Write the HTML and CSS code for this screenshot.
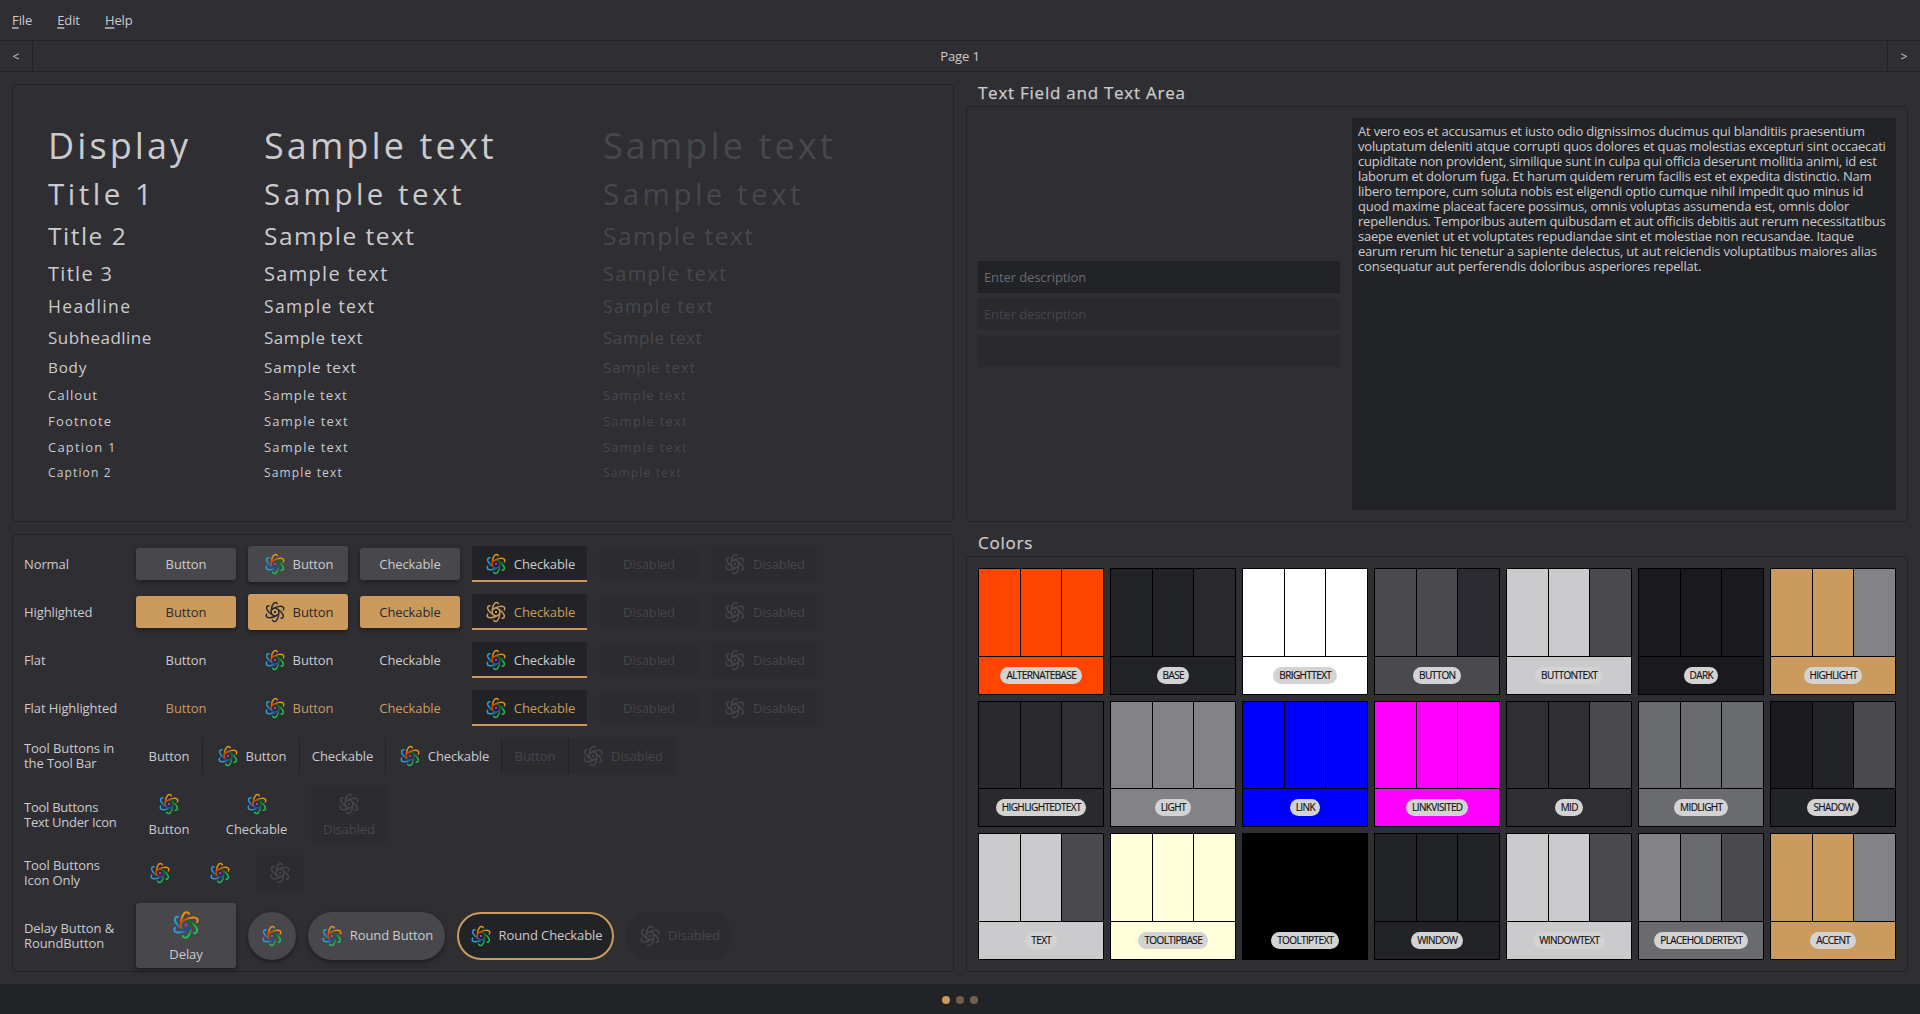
FILE: index.html
```html
<!DOCTYPE html>
<html lang="en">
<head>
<meta charset="utf-8">
<title>Page 1</title>
<link rel="stylesheet" href="styles.css">
</head>
<body>
<svg class="defs" width="0" height="0" aria-hidden="true">
  <defs>
    <linearGradient id="gold" gradientUnits="userSpaceOnUse" x1="12" y1="2" x2="9" y2="14"><stop offset=".3" stop-color="#e8930f"/><stop offset=".75" stop-color="#cc4a05"/></linearGradient>
    <linearGradient id="leaf" gradientUnits="userSpaceOnUse" x1="12" y1="2" x2="9" y2="14"><stop offset=".2" stop-color="#1fbf55"/><stop offset=".8" stop-color="#0b6b22"/></linearGradient>
    <linearGradient id="sky" gradientUnits="userSpaceOnUse" x1="12" y1="2" x2="9" y2="14"><stop offset=".25" stop-color="#2a9cd8"/><stop offset=".85" stop-color="#234a94"/></linearGradient>
    <path id="arm" d="M14.3 3.7C13.6 2.2 12 1.9 10.7 3.2C9.1 4.9 8.5 7.6 8.3 10C8.2 11.6 8.2 12.8 8.4 14" fill="none" stroke-width="1.5" stroke-linecap="round"/>
    <symbol id="logo" viewBox="0 0 24 24">
      <use href="#arm" stroke="url(#leaf)" transform="rotate(120 12 12)"/>
      <use href="#arm" stroke="url(#leaf)" transform="rotate(180 12 12)"/>
      <use href="#arm" stroke="url(#sky)" transform="rotate(240 12 12)"/>
      <use href="#arm" stroke="url(#sky)" transform="rotate(300 12 12)"/>
      <use href="#arm" stroke="url(#gold)"/>
      <use href="#arm" stroke="url(#gold)" transform="rotate(60 12 12)"/>
      <rect x="11" y="11" width="2" height="2" fill="#a33fc0"/>
    </symbol>
    <symbol id="mono" viewBox="0 0 24 24">
      <g stroke="currentColor">
      <use href="#arm"/>
      <use href="#arm" transform="rotate(60 12 12)"/>
      <use href="#arm" transform="rotate(120 12 12)"/>
      <use href="#arm" transform="rotate(180 12 12)"/>
      <use href="#arm" transform="rotate(240 12 12)"/>
      <use href="#arm" transform="rotate(300 12 12)"/>
      </g>
      <rect x="11" y="11" width="2" height="2" fill="currentColor"/>
    </symbol>
  </defs>
</svg>

<nav class="menubar"><span><u>F</u>ile</span><span><u>E</u>dit</span><span><u>H</u>elp</span></nav>
<header class="toolbar"><span class="nav prev">&lt;</span><span class="page-title">Page 1</span><span class="nav next">&gt;</span></header>

<main class="content">
  <div class="column left">
    <section class="panel type">
      <div class="t display"><span>Display</span><span>Sample text</span><span>Sample text</span></div>
      <div class="t title1"><span>Title 1</span><span>Sample text</span><span>Sample text</span></div>
      <div class="t title2"><span>Title 2</span><span>Sample text</span><span>Sample text</span></div>
      <div class="t title3"><span>Title 3</span><span>Sample text</span><span>Sample text</span></div>
      <div class="t headline"><span>Headline</span><span>Sample text</span><span>Sample text</span></div>
      <div class="t subheadline"><span>Subheadline</span><span>Sample text</span><span>Sample text</span></div>
      <div class="t body"><span>Body</span><span>Sample text</span><span>Sample text</span></div>
      <div class="t callout"><span>Callout</span><span>Sample text</span><span>Sample text</span></div>
      <div class="t footnote"><span>Footnote</span><span>Sample text</span><span>Sample text</span></div>
      <div class="t footnote cap1"><span>Caption 1</span><span>Sample text</span><span>Sample text</span></div>
      <div class="t cap2"><span>Caption 2</span><span>Sample text</span><span>Sample text</span></div>
    </section>

    <section class="panel buttons">
      <div class="row"><span class="label">Normal</span>
        <div class="btn raised w100">Button</div>
        <div class="btn raised tall w100"><svg class="icon"><use href="#logo"/></svg>Button</div>
        <div class="btn raised w100">Checkable</div>
        <div class="btn checked tall w115"><svg class="icon"><use href="#logo"/></svg>Checkable</div>
        <div class="btn disabled w100">Disabled</div>
        <div class="btn disabled tall w106"><svg class="icon"><use href="#mono"/></svg>Disabled</div>
      </div>
      <div class="row"><span class="label">Highlighted</span>
        <div class="btn raised gold w100">Button</div>
        <div class="btn raised gold tall w100"><svg class="icon"><use href="#mono"/></svg>Button</div>
        <div class="btn raised gold w100">Checkable</div>
        <div class="btn checked accent tall w115"><svg class="icon"><use href="#mono"/></svg>Checkable</div>
        <div class="btn disabled w100">Disabled</div>
        <div class="btn disabled tall w106"><svg class="icon"><use href="#mono"/></svg>Disabled</div>
      </div>
      <div class="row"><span class="label">Flat</span>
        <div class="btn w100">Button</div>
        <div class="btn tall w100"><svg class="icon"><use href="#logo"/></svg>Button</div>
        <div class="btn w100">Checkable</div>
        <div class="btn checked square tall w115"><svg class="icon"><use href="#logo"/></svg>Checkable</div>
        <div class="btn disabled w100">Disabled</div>
        <div class="btn disabled tall w106"><svg class="icon"><use href="#mono"/></svg>Disabled</div>
      </div>
      <div class="row"><span class="label">Flat Highlighted</span>
        <div class="btn accent w100">Button</div>
        <div class="btn accent tall w100"><svg class="icon"><use href="#logo"/></svg>Button</div>
        <div class="btn accent w100">Checkable</div>
        <div class="btn checked square accent tall w115"><svg class="icon"><use href="#logo"/></svg>Checkable</div>
        <div class="btn disabled w100">Disabled</div>
        <div class="btn disabled tall w106"><svg class="icon"><use href="#mono"/></svg>Disabled</div>
      </div>
      <div class="row tools"><span class="label">Tool Buttons in<br>the Tool Bar</span>
        <div class="btn tall w66">Button</div><i class="sep"></i>
        <div class="btn tall w96"><svg class="icon"><use href="#logo"/></svg>Button</div><i class="sep"></i>
        <div class="btn tall w85">Checkable</div><i class="sep"></i>
        <div class="btn tall w115"><svg class="icon"><use href="#logo"/></svg>Checkable</div><i class="sep"></i>
        <div class="btn disabled square tall w66">Button</div><i class="sep"></i>
        <div class="btn disabled square tall w106"><svg class="icon"><use href="#mono"/></svg>Disabled</div>
      </div>
      <div class="row under"><span class="label">Tool Buttons<br>Text Under Icon</span>
        <div class="btn stack w66"><svg class="icon"><use href="#logo"/></svg>Button</div>
        <div class="btn stack w85"><svg class="icon"><use href="#logo"/></svg>Checkable</div>
        <div class="btn stack disabled square w76"><svg class="icon"><use href="#mono"/></svg>Disabled</div>
      </div>
      <div class="row"><span class="label">Tool Buttons<br>Icon Only</span>
        <div class="btn tall w48"><svg class="icon"><use href="#logo"/></svg></div>
        <div class="btn tall w48"><svg class="icon"><use href="#logo"/></svg></div>
        <div class="btn tall disabled square w48"><svg class="icon"><use href="#mono"/></svg></div>
      </div>
      <div class="row last"><span class="label">Delay Button &amp;<br>RoundButton</span>
        <div class="btn raised stack delay w100"><svg class="icon"><use href="#logo"/></svg>Delay</div>
        <div class="btn raised round w48"><svg class="icon"><use href="#logo"/></svg></div>
        <div class="btn raised round w137"><svg class="icon"><use href="#logo"/></svg>Round Button</div>
        <div class="btn round ring w157"><svg class="icon"><use href="#logo"/></svg>Round Checkable</div>
        <div class="btn round disabled w106"><svg class="icon"><use href="#mono"/></svg>Disabled</div>
      </div>
    </section>
  </div>

  <div class="column right">
    <h2>Text Field and Text Area</h2>
    <section class="panel fields">
      <div class="inputs">
        <div class="field">Enter description</div>
        <div class="field off">Enter description</div>
        <div class="field off"></div>
      </div>
      <div class="textarea">At vero eos et accusamus et iusto odio dignissimos ducimus qui blanditiis praesentium<br>voluptatum deleniti atque corrupti quos dolores et quas molestias excepturi sint occaecati<br>cupiditate non provident, similique sunt in culpa qui officia deserunt mollitia animi, id est<br>laborum et dolorum fuga. Et harum quidem rerum facilis est et expedita distinctio. Nam<br>libero tempore, cum soluta nobis est eligendi optio cumque nihil impedit quo minus id<br>quod maxime placeat facere possimus, omnis voluptas assumenda est, omnis dolor<br>repellendus. Temporibus autem quibusdam et aut officiis debitis aut rerum necessitatibus<br>saepe eveniet ut et voluptates repudiandae sint et molestiae non recusandae. Itaque<br>earum rerum hic tenetur a sapiente delectus, ut aut reiciendis voluptatibus maiores alias<br>consequatur aut perferendis doloribus asperiores repellat.</div>
    </section>
    <h2 class="second">Colors</h2>
    <section class="panel colors">
      <div class="swatch" style="--a:#ff4500;--b:#ff4500;--c:#ff4500"><i></i><i></i><i></i><div><b>ALTERNATEBASE</b></div></div>
      <div class="swatch" style="--a:#222327;--b:#222327;--c:#2a292e"><i></i><i></i><i></i><div><b>BASE</b></div></div>
      <div class="swatch" style="--a:#fff;--b:#fff;--c:#fff"><i></i><i></i><i></i><div><b>BRIGHTTEXT</b></div></div>
      <div class="swatch" style="--a:#4a494d;--b:#4a494d;--c:#2c2b31"><i></i><i></i><i></i><div><b>BUTTON</b></div></div>
      <div class="swatch" style="--a:#cbcbcd;--b:#cbcbcd;--c:#4a494d"><i></i><i></i><i></i><div><b>BUTTONTEXT</b></div></div>
      <div class="swatch" style="--a:#1a191e;--b:#1a191e;--c:#1a191e"><i></i><i></i><i></i><div><b>DARK</b></div></div>
      <div class="swatch" style="--a:#ca9b5c;--b:#ca9b5c;--c:#828287"><i></i><i></i><i></i><div><b>HIGHLIGHT</b></div></div>
      <div class="swatch" style="--a:#2a292e;--b:#2a292e;--c:#2f2e33"><i></i><i></i><i></i><div><b>HIGHLIGHTEDTEXT</b></div></div>
      <div class="swatch" style="--a:#828287;--b:#828287;--c:#828287"><i></i><i></i><i></i><div><b>LIGHT</b></div></div>
      <div class="swatch" style="--a:#00f;--b:#00f;--c:#00f"><i></i><i></i><i></i><div><b>LINK</b></div></div>
      <div class="swatch" style="--a:#f0f;--b:#f0f;--c:#f0f"><i></i><i></i><i></i><div><b>LINKVISITED</b></div></div>
      <div class="swatch" style="--a:#2f2e32;--b:#2f2e32;--c:#4a494d"><i></i><i></i><i></i><div><b>MID</b></div></div>
      <div class="swatch" style="--a:#6a6b6f;--b:#6a6b6f;--c:#6a6b6f"><i></i><i></i><i></i><div><b>MIDLIGHT</b></div></div>
      <div class="swatch" style="--a:#1a191e;--b:#222327;--c:#4a494d"><i></i><i></i><i></i><div><b>SHADOW</b></div></div>
      <div class="swatch" style="--a:#cbcbcd;--b:#cbcbcd;--c:#4a494d"><i></i><i></i><i></i><div><b>TEXT</b></div></div>
      <div class="swatch" style="--a:#ffffdc;--b:#ffffdc;--c:#ffffdc"><i></i><i></i><i></i><div><b>TOOLTIPBASE</b></div></div>
      <div class="swatch" style="--a:#000;--b:#000;--c:#000"><i></i><i></i><i></i><div><b>TOOLTIPTEXT</b></div></div>
      <div class="swatch" style="--a:#222327;--b:#222327;--c:#222327"><i></i><i></i><i></i><div><b>WINDOW</b></div></div>
      <div class="swatch" style="--a:#cbcbcd;--b:#cbcbcd;--c:#4a494d"><i></i><i></i><i></i><div><b>WINDOWTEXT</b></div></div>
      <div class="swatch" style="--a:#828287;--b:#6a6b6f;--c:#4a494d"><i></i><i></i><i></i><div><b>PLACEHOLDERTEXT</b></div></div>
      <div class="swatch" style="--a:#ca9b5c;--b:#ca9b5c;--c:#828287"><i></i><i></i><i></i><div><b>ACCENT</b></div></div>
    </section>
  </div>
</main>
<footer class="pager"><i class="on"></i><i></i><i></i></footer>
</body>
</html>
```
FILE: styles.css
```css
* { box-sizing: border-box; }
body {
  margin: 0;
  width: 1920px;
  height: 1014px;
  overflow: hidden;
  display: flex;
  flex-direction: column;
  background: #2f2e33;
  color: #cbcbcd;
  font: 13px/15px "Open Sans", "Noto Sans", sans-serif;
  letter-spacing: -0.1px;
}
.defs { position: absolute; }

.menubar { height: 41px; border-bottom: 1px solid #222327; display: flex; align-items: center; gap: 25px; padding-left: 12px; }
.menubar u { text-underline-offset: 2px; text-decoration-thickness: 1.5px; text-decoration-color: #9a9a9c; }

.toolbar { height: 31px; border-bottom: 1px solid #222327; display: flex; }
.nav { display: flex; align-items: center; justify-content: center; font-size: 12px; }
.prev { width: 33px; border-right: 1px solid #222327; }
.next { width: 33px; border-left: 1px solid #222327; }
.page-title { flex: 1; display: flex; align-items: center; justify-content: center; }

.content { flex: 1; display: flex; gap: 12px; padding: 12px 12px 12px; min-height: 0; }
.column { display: flex; flex-direction: column; width: 942px; }
.left { gap: 12px; }
.panel { border: 1px solid #222327; border-radius: 5px; }

.type { height: 438px; padding: 35px 0 0 35px; }
.t { display: grid; grid-template-columns: 216px 339px 1fr; white-space: nowrap; }
.t span:last-child { color: #48484c; }
.display { font-size: 36px; line-height: 51px; letter-spacing: 3.1px; }
.title1 { font-size: 29.5px; line-height: 46px; letter-spacing: 3.5px; }
.title2 { font-size: 24.5px; line-height: 38px; letter-spacing: 1.5px; }
.title3 { font-size: 20px; line-height: 37px; letter-spacing: 1.3px; }
.headline { font-size: 17.5px; line-height: 29px; letter-spacing: 1.35px; }
.subheadline { font-size: 17px; line-height: 33px; letter-spacing: 0.48px; }
.body { font-size: 15.3px; line-height: 27px; letter-spacing: 0.76px; }
.callout { font-size: 13.3px; line-height: 28px; letter-spacing: 0.95px; }
.footnote { font-size: 13px; line-height: 25px; letter-spacing: 1.2px; }
.cap1 { line-height: 27px; }
.cap2 { font-size: 12px; line-height: 24px; letter-spacing: 1.15px; }

.buttons { height: 438px; padding: 11px 0 0 11px; display: flex; flex-direction: column; gap: 12px; }
.row { display: flex; align-items: center; gap: 12px; height: 36px; flex: none; }
.label { width: 100px; white-space: nowrap; letter-spacing: -0.1px; }
.tools { gap: 0; }
.tools .label { margin-right: 12px; }
.sep { width: 1px; height: 36px; background: #222327; }
.under { height: 57px; }
.under .label { letter-spacing: -0.25px; }
.last { height: 65px; }

.btn { height: 32px; display: flex; align-items: center; justify-content: center; gap: 6px; border-radius: 3px; white-space: nowrap; flex: none; }
.tall { height: 36px; }
.icon { width: 24px; height: 24px; flex: none; }
.raised { background: #48474b; box-shadow: 0 2px 5px rgba(0, 0, 0, .4); }
.gold { background: #ca9b5c; color: #2a292e; }
.accent { color: #ca9b5c; }
.checked { background: linear-gradient(#ca9b5c, #ca9b5c) bottom / 100% 2px no-repeat #222327; border-radius: 3px 3px 0 0; }
.disabled { background: #2c2b30; color: #47464a; }
.square { border-radius: 0; }
.stack { flex-direction: column; height: 57px; }
.delay { height: 65px; }
.delay .icon { width: 32px; height: 32px; }
.round { height: 48px; border-radius: 24px; }
.ring { background: #222327; border: 2px solid #ca9b5c; }
.w48 { width: 48px; }
.w66 { width: 66px; }
.w76 { width: 76px; }
.w85 { width: 85px; }
.w96 { width: 96px; }
.w100 { width: 100px; }
.w106 { width: 106px; }
.w115 { width: 115px; }
.w137 { width: 137px; }
.w157 { width: 157px; }

h2 { margin: 0; height: 22px; padding-left: 12px; font-size: 17px; font-weight: 500; line-height: 18px; letter-spacing: 0.75px; -webkit-text-stroke: 0.25px; }
.second { margin-top: 12px; }
.fields { height: 416px; display: flex; gap: 12px; padding: 11px; }
.inputs { width: 362px; display: flex; flex-direction: column; justify-content: center; gap: 5px; }
.field { height: 32px; padding: 0 6px; display: flex; align-items: center; background: #222327; color: #6a6b6f; }
.field.off { background: #2a292e; color: #47464a; }
.textarea { width: 544px; padding: 6px; background: #222327; white-space: nowrap; letter-spacing: -0.2px; }

.colors { height: 416px; padding: 11px; display: grid; grid-template-columns: repeat(7, 126px); grid-template-rows: 127px 126px 127px; gap: 6px; }
.swatch { background: #000; padding: 1px; display: grid; grid-template-columns: 41px 40px 41px; grid-template-rows: 1fr 37px; gap: 1px; }
.swatch i:nth-child(1) { background: var(--a); }
.swatch i:nth-child(2) { background: var(--b); }
.swatch i:nth-child(3) { background: var(--c); }
.swatch div { grid-column: 1 / 4; background: var(--b); display: flex; align-items: center; justify-content: center; }
.swatch b { height: 17px; padding: 0 5.4px 0 6px; border-radius: 8.5px; background: #d3d3d3; color: #111; font-size: 10px; font-weight: 500; line-height: 17px; letter-spacing: -0.6px; -webkit-text-stroke: 0.15px; }

.pager { height: 30px; background: #222327; display: flex; align-items: center; justify-content: center; gap: 6px; padding-top: 2px; }
.pager i { width: 8px; height: 8px; border-radius: 50%; background: #765f48; }
.pager .on { background: #ca9b5c; }
```
